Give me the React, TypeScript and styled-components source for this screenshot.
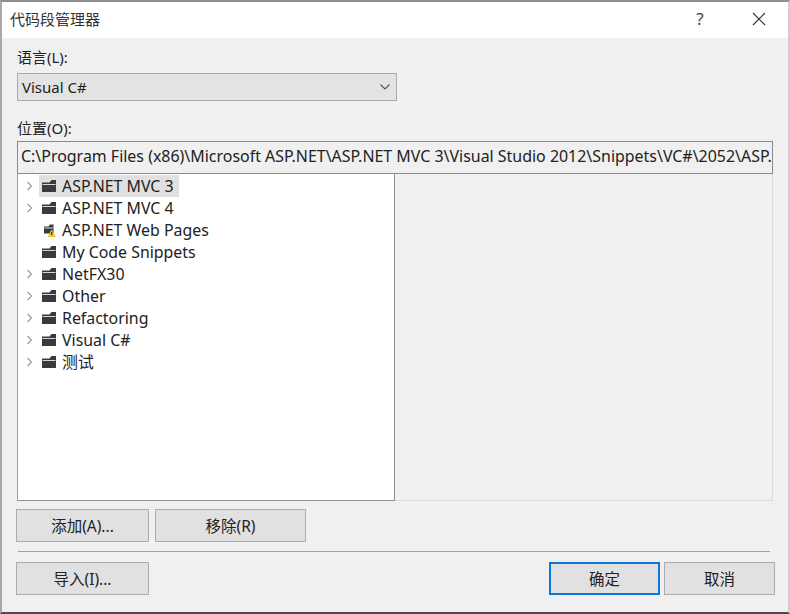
import React from 'react'
import styled, { createGlobalStyle } from 'styled-components'

const GlobalStyle = createGlobalStyle`
  html, body {
    margin: 0;
    padding: 0;
    background: #f0f0f0;
  }
  * {
    box-sizing: border-box;
  }
`

interface TreeItem {
  name: string
  expandable: boolean
  selected?: boolean
  warning?: boolean
}

const treeItems: TreeItem[] = [
  { name: 'ASP.NET MVC 3', expandable: true, selected: true },
  { name: 'ASP.NET MVC 4', expandable: true },
  { name: 'ASP.NET Web Pages', expandable: false, warning: true },
  { name: 'My Code Snippets', expandable: false },
  { name: 'NetFX30', expandable: true },
  { name: 'Other', expandable: true },
  { name: 'Refactoring', expandable: true },
  { name: 'Visual C#', expandable: true },
  { name: '测试', expandable: true },
]

const FolderIcon = ({ warning }: { warning?: boolean }) => (
  <svg width="16" height="16" viewBox="0 0 16 16">
    {warning ? (
      <>
        <path d="M3 4.5 L7.5 4.5 L9 2.5 L12.5 2.5 L12.5 11.5 L3 11.5 Z" fill="#3a3a3a" />
        <path d="M3.5 6 L12 6" stroke="#d6d6d6" strokeWidth="1" />
        <path d="M10.5 7.5 L15 15 L6.5 15 Z" fill="#f4c430" />
        <path d="M10.7 10 L10.7 13" stroke="#3a3000" strokeWidth="1.2" />
      </>
    ) : (
      <>
        <path d="M1 4.5 L8.5 4.5 L10.5 2 L15 2 L15 14 L1 14 Z" fill="#3a3a3a" />
        <path d="M1.5 6.5 L14.5 6.5" stroke="#d6d6d6" strokeWidth="1" />
      </>
    )}
  </svg>
)

const Chevron = () => (
  <svg width="7" height="10" viewBox="0 0 7 10">
    <path d="M1.5 1 L5.5 5 L1.5 9" fill="none" stroke="#9a9a9a" strokeWidth="1.1" />
  </svg>
)

export default function App() {
  return (
    <>
      <GlobalStyle />
      <Dialog>
        <TitleBar>
          <Title>代码段管理器</Title>
          <HelpButton>?</HelpButton>
          <CloseButton>
            <svg width="14" height="14" viewBox="0 0 14 14">
              <path d="M1 1 L13 13 M13 1 L1 13" stroke="#333" strokeWidth="1.1" fill="none" />
            </svg>
          </CloseButton>
        </TitleBar>
        <Body>
          <Label>语言(L):</Label>
          <Select>
            <span>Visual C#</span>
            <svg width="10" height="6" viewBox="0 0 10 6">
              <path d="M0.5 0.5 L5 5 L9.5 0.5" fill="none" stroke="#555" strokeWidth="1.1" />
            </svg>
          </Select>
          <LocationLabel>位置(O):</LocationLabel>
          <PathBox>C:\Program Files (x86)\Microsoft ASP.NET\ASP.NET MVC 3\Visual Studio 2012\Snippets\VC#\2052\ASP.</PathBox>
          <Panes>
            <TreePane>
              {treeItems.map((item) => (
                <TreeRow key={item.name}>
                  <Expander>{item.expandable && <Chevron />}</Expander>
                  <TreeEntry $selected={item.selected}>
                    <FolderIcon warning={item.warning} />
                    <TreeName>{item.name}</TreeName>
                  </TreeEntry>
                </TreeRow>
              ))}
            </TreePane>
            <DetailPane />
          </Panes>
          <ButtonRow>
            <Button $width={133}>添加(A)...</Button>
            <Button $width={151}>移除(R)</Button>
          </ButtonRow>
          <Separator />
          <Footer>
            <Button $width={133}>导入(I)...</Button>
            <FooterRight>
              <Button $width={111} $primary>确定</Button>
              <Button $width={111}>取消</Button>
            </FooterRight>
          </Footer>
        </Body>
      </Dialog>
    </>
  )
}

const fontStack = `"Noto Sans", "Noto Sans CJK SC", sans-serif`

const Dialog = styled.div`
  width: 790px;
  height: 614px;
  display: flex;
  flex-direction: column;
  background: #f0f0f0;
  border-top: 2px solid #8f8f8f;
  border-left: 2px solid #a8a8a8;
  border-right: 2px solid #cfcfcf;
  border-bottom: 2px solid #4a4a4a;
  font-family: ${fontStack};
  font-size: 15px;
  color: #222;
  overflow: hidden;
`

const TitleBar = styled.div`
  height: 36px;
  flex: none;
  display: flex;
  align-items: center;
  background: #fff;
  padding: 0 0 3px 8px;
`

const Title = styled.div`
  flex: 1;
  font-size: 15px;
  color: #333;
`

const HelpButton = styled.div`
  width: 46px;
  text-align: center;
  font-size: 17px;
  color: #444;
  margin-right: 13px;
`

const CloseButton = styled.div`
  width: 46px;
  display: flex;
  justify-content: center;
  margin-right: 6px;
`

const Body = styled.div`
  flex: 1;
  display: flex;
  flex-direction: column;
  padding: 9px 13px 0 14px;
`

const Label = styled.div`
  height: 20px;
  line-height: 20px;
  margin-left: 1px;
  margin-bottom: 6px;
`

const LocationLabel = styled(Label)`
  margin-top: 17px;
  margin-bottom: 3px;
`

const Select = styled.div`
  width: 380px;
  height: 28px;
  margin-left: 1px;
  display: flex;
  align-items: center;
  justify-content: space-between;
  padding: 0 6px 0 4px;
  background: #e3e3e3;
  border: 1px solid #ababab;
`

const PathBox = styled.div`
  width: 756px;
  height: 33px;
  flex: none;
  margin-left: 1px;
  font-size: 15.95px;
  line-height: 28px;
  padding-left: 3px;
  white-space: nowrap;
  overflow: hidden;
  background: #f0f0f0;
  border: 1px solid #8a8a8a;
`

const Panes = styled.div`
  width: 756px;
  height: 327px;
  flex: none;
  margin-left: 1px;
  display: flex;
`

const TreePane = styled.div`
  width: 378px;
  padding-top: 1px;
  background: #fff;
  border-left: 1px solid #a0a0a0;
  border-right: 1px solid #8f8f8f;
  border-bottom: 1px solid #8f8f8f;
`

const DetailPane = styled.div`
  flex: 1;
  border-right: 1px solid #dcdcdc;
  border-bottom: 1px solid #dcdcdc;
`

const TreeRow = styled.div`
  height: 22px;
  display: flex;
  align-items: center;
`

const Expander = styled.div`
  width: 21px;
  flex: none;
  display: flex;
  justify-content: flex-end;
  padding-right: 6px;
`

const TreeEntry = styled.div<{ $selected?: boolean }>`
  height: 22px;
  display: flex;
  align-items: center;
  gap: 5px;
  padding: 0 5px 0 2px;
  background: ${(props) => (props.$selected ? '#e0e0e0' : 'transparent')};
`

const TreeName = styled.span`
  font-size: 15.9px;
  line-height: 22px;
`

const ButtonRow = styled.div`
  display: flex;
  gap: 6px;
  margin-top: 8px;
`

const Button = styled.div<{ $width: number; $primary?: boolean }>`
  width: ${(props) => props.$width}px;
  height: 33px;
  display: flex;
  align-items: center;
  justify-content: center;
  font-size: 15.5px;
  background: #e1e1e1;
  border: ${(props) => (props.$primary ? '2px solid #0a78d4' : '1px solid #adadad')};
`

const Separator = styled.div`
  height: 1px;
  width: 752px;
  margin: 9px 0 10px 2px;
  background: #a0a0a0;
`

const Footer = styled.div`
  display: flex;
  justify-content: space-between;
  width: 759px;
`

const FooterRight = styled.div`
  display: flex;
  gap: 4px;
`
